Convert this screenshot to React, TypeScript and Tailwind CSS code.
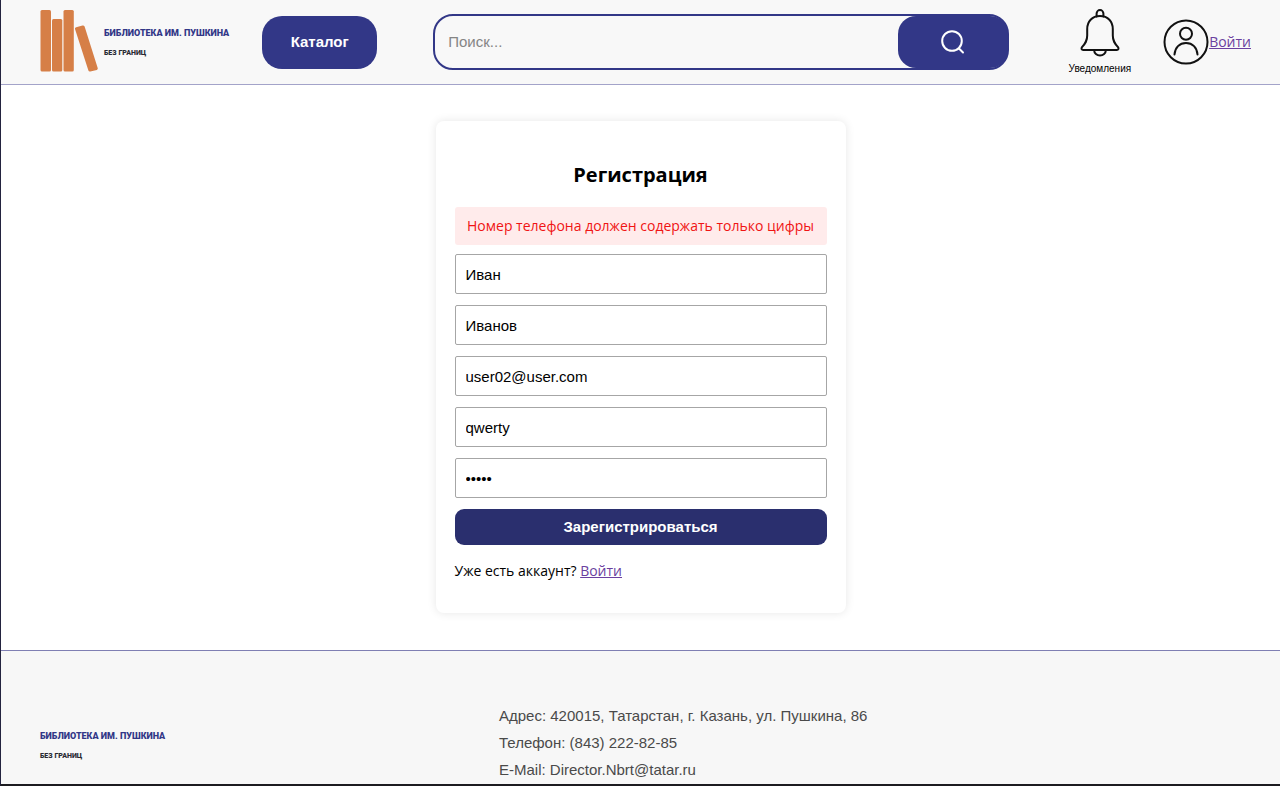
import { useState } from "react";

const fields = [
  { id: "firstName", label: "Имя", type: "text", value: "Иван" },
  { id: "lastName", label: "Фамилия", type: "text", value: "Иванов" },
  { id: "email", label: "E-Mail", type: "email", value: "user02@user.com" },
  { id: "phone", label: "Телефон", type: "text", value: "qwerty" },
  { id: "password", label: "Пароль", type: "password", value: "12345" },
];

function BooksIcon() {
  return (
    <svg width="58" height="62" viewBox="0 0 58 62" fill="#d67f47" aria-hidden="true">
      <rect x="0.5" y="0" width="10.5" height="61.5" rx="1.5" />
      <rect x="12" y="9" width="10.3" height="52.5" rx="1.5" />
      <rect x="23.5" y="0" width="10.3" height="61.5" rx="1.5" />
      <path d="M36.2 17.3 42.5 15.5Q44 15.2 44.6 16.6L57.7 58Q58.1 59.4 56.8 59.9L50.3 61.5Q48.9 61.8 48.4 60.5L35 19Q34.7 17.7 36.2 17.3Z" />
    </svg>
  );
}

function BrandName() {
  return (
    <div className="font-[Roboto,sans-serif] font-black whitespace-nowrap">
      <div className="text-[9px] leading-5 text-[#323787]">БИБЛИОТЕКА ИМ. ПУШКИНА</div>
      <div className="text-[7px] leading-5 text-[#2a2a33]">БЕЗ ГРАНИЦ</div>
    </div>
  );
}

function BellIcon() {
  return (
    <svg width="40" height="48" viewBox="0 0 40 48" fill="none" stroke="#111" strokeWidth="2" strokeLinecap="round" strokeLinejoin="round" aria-hidden="true">
      <path d="M16.6 7.5V4.5a3.4 3.4 0 0 1 6.8 0v3" />
      <path d="M20 7C12 7 7.2 12.5 7.2 20v6.5C7.2 32 5.3 34.5 2 38.2 1 39.6 1.6 41 3.2 41H36.8c1.6 0 2.2-1.4 1.2-2.8C34.7 34.5 32.8 32 32.8 26.500V20C32.8 12.500 28 7 20 7Z" />
      <path d="M14.2 41.500a5.800 5 0 0 0 11.600 0" />
    </svg>
  );
}

function UserIcon() {
  return (
    <svg width="46" height="46" viewBox="0 0 46 46" fill="none" stroke="#111" strokeWidth="2" strokeLinecap="round" aria-hidden="true">
      <circle cx="23" cy="23" r="21.500" />
      <circle cx="23" cy="14.800" r="6" />
      <path d="M11.500 35.500C12 28.500 16.500 24 23 24s11 4.500 11.500 11.500" />
    </svg>
  );
}

function SearchIcon() {
  return (
    <svg width="26" height="26" viewBox="0 0 26 26" fill="none" stroke="#fff" strokeWidth="2" strokeLinecap="round" aria-hidden="true">
      <circle cx="12" cy="12" r="9.800" />
      <path d="m19 19.500 4 4" />
    </svg>
  );
}

export default function App() {
  const [values, setValues] = useState<Record<string, string>>(
    Object.fromEntries(fields.map((f) => [f.id, f.value]))
  );

  return (
    <div className="flex min-h-screen flex-col border-b-2 border-l border-b-[#1c1b20] border-l-[#23233f] bg-white font-['Open_Sans',sans-serif] text-sm text-black">
      <header className="flex items-center border-b border-[#a3a3c9] bg-[#f8f8f8] pr-[29px] pl-[39px]">
        <a href="#" className="flex items-center gap-1.5 pt-2.5 pb-3">
          <BooksIcon />
          <div className="pt-1">
            <BrandName />
          </div>
        </a>
        <button type="button" className="ml-[33px] h-[53px] w-[115px] shrink-0 rounded-[20px] bg-[#323787] font-['Liberation_Sans',sans-serif] text-[15px] font-bold text-white">
          Каталог
        </button>
        <form className="mr-[60px] ml-14 flex h-14 min-w-0 flex-1 rounded-[20px] border-2 border-[#323787]" onSubmit={(e) => e.preventDefault()}>
          <input type="search" aria-label="Поиск" placeholder="Поиск..." className="min-w-0 flex-1 bg-transparent px-[13px] font-['Liberation_Sans',sans-serif] text-[15px] outline-none placeholder:text-[#858585]" />
          <button type="submit" aria-label="Найти" className="-mr-px flex w-[110px] items-center justify-center rounded-[18px] bg-[#323787]">
            <SearchIcon />
          </button>
        </form>
        <a href="#" className="flex flex-col items-center gap-1 pt-0.5 font-['Liberation_Sans',sans-serif] text-[10px] leading-4">
          <BellIcon />
          Уведомления
        </a>
        <a href="#" className="ml-8 flex items-center text-[#6b3fa0] underline">
          <UserIcon />
          Войти
        </a>
      </header>

      <main className="flex flex-1 justify-center pt-9 pb-[37px]">
        <form className="flex w-[410px] flex-col rounded-lg px-[19px] pt-[38px] pb-8 shadow-[0_0_10px_rgba(0,0,0,0.1)]" onSubmit={(e) => e.preventDefault()}>
          <h1 className="text-center text-xl leading-8 font-bold">Регистрация</h1>
          <p role="alert" className="mt-4 mb-[9px] rounded-[3px] bg-[#ffebeb] text-center leading-[38px] whitespace-nowrap text-[#f01414]">
            Номер телефона должен содержать только цифры
          </p>
          <div className="flex flex-col gap-[11px] font-['Liberation_Sans',sans-serif] text-[15px]">
            {fields.map((f) => (
              <input
                key={f.id}
                id={f.id}
                type={f.type}
                aria-label={f.label}
                value={values[f.id]}
                onChange={(e) => setValues({ ...values, [f.id]: e.target.value })}
                className="h-10 w-full rounded-[2px] border border-[#a6a6a6] bg-white px-2.5"
              />
            ))}
            <button type="submit" className="h-9 rounded-[9px] bg-[#2a2f6e] font-bold text-white">
              Зарегистрироваться
            </button>
          </div>
          <p className="mt-4 leading-5">
            Уже есть аккаунт?{" "}
            <a href="#" className="text-[#6b3fa0] underline">Войти</a>
          </p>
        </form>
      </main>

      <footer className="grid grid-cols-[459px_1fr] border-t border-[#7f7fb3] bg-[#f7f7f7] pt-[51px] pb-px pl-[39px] font-['Liberation_Sans',sans-serif] text-[15px] text-[#4a4a4a]">
        <div className="pt-6">
          <BrandName />
        </div>
        <address className="leading-[27px] not-italic">
          <p>Адрес: 420015, Татарстан, г. Казань, ул. Пушкина, 86</p>
          <p>Телефон: (843) 222-82-85</p>
          <p>E-Mail: Director.Nbrt@tatar.ru</p>
        </address>
      </footer>
    </div>
  );
}
